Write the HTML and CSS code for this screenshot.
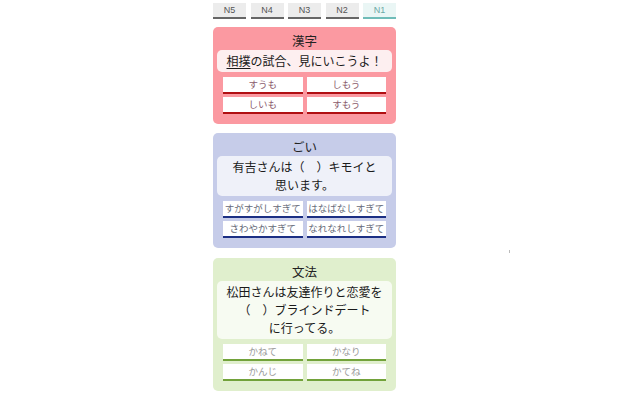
FILE: index.html
```html
<!DOCTYPE html>
<html lang="ja">
<head>
<meta charset="utf-8">
<link rel="stylesheet" href="styles.css">
</head>
<body>
<div class="app">
  <nav class="tabs">
    <div class="tab">N5</div>
    <div class="tab">N4</div>
    <div class="tab">N3</div>
    <div class="tab">N2</div>
    <div class="tab active">N1</div>
  </nav>

  <section class="card kanji">
    <div class="title">漢字</div>
    <div class="question"><u>相撲</u>の試合、見にいこうよ！</div>
    <div class="answers">
      <div class="answer">すうも</div>
      <div class="answer">しもう</div>
      <div class="answer">しいも</div>
      <div class="answer">すもう</div>
    </div>
  </section>

  <section class="card goi">
    <div class="title">ごい</div>
    <div class="question">有吉さんは（　）キモイと<br>思います。</div>
    <div class="answers">
      <div class="answer">すがすがしすぎて</div>
      <div class="answer">はなばなしすぎて</div>
      <div class="answer">さわやかすぎて</div>
      <div class="answer">なれなれしすぎて</div>
    </div>
  </section>

  <section class="card bunpo">
    <div class="title">文法</div>
    <div class="question">松田さんは友達作りと恋愛を<br>（　）ブラインドデート<br>に行ってる。</div>
    <div class="answers">
      <div class="answer">かねて</div>
      <div class="answer">かなり</div>
      <div class="answer">かんじ</div>
      <div class="answer">かてね</div>
    </div>
  </section>
</div>
<span class="dot"></span>
</body>
</html>
```

FILE: styles.css
```css
html, body {
  margin: 0;
  padding: 0;
  background: #ffffff;
}
body {
  font-family: "Noto Sans CJK JP", "Noto Sans", sans-serif;
  color: #222;
}
.app {
  width: 183px;
  margin-left: 213px;
  padding-top: 3px;
  display: flex;
  flex-direction: column;
}
.tabs {
  display: flex;
  justify-content: space-between;
  margin-bottom: 8px;
}
.tab {
  width: 33px;
  height: 14px;
  line-height: 14px;
  background: #ececec;
  border-bottom: 2px solid #666;
  text-align: center;
  font-family: "Liberation Sans", Arial, sans-serif;
  font-size: 9px;
  color: #555;
}
.tab.active {
  background: #eaf6f5;
  border-bottom-color: #6fbcb8;
  color: #6aa9a6;
}
.card {
  border-radius: 5px;
  padding: 4px 4px 10px;
  margin-bottom: 9px;
  display: flex;
  flex-direction: column;
}
.card.goi { margin-bottom: 10px; }
.title {
  height: 19px;
  line-height: 19px;
  text-align: center;
  font-size: 12.5px;
  color: #222;
}
.question {
  border-radius: 5px;
  padding: 2px 0;
  line-height: 18px;
  font-size: 12px;
  text-align: center;
  color: #1a1a1a;
}
.question u {
  text-decoration-thickness: 1px;
  text-underline-offset: 2px;
}
.answers {
  margin: 5px 6px 0;
  display: grid;
  grid-template-columns: 1fr 1fr;
  column-gap: 4px;
  row-gap: 3px;
}
.answer {
  background: #fff;
  height: 15px;
  line-height: 15px;
  font-size: 9.5px;
  text-align: center;
  border-bottom: 2px solid;
  white-space: nowrap;
  overflow: hidden;
}
.kanji { background: #fb99a1; }
.kanji .question { background: #fdeff0; }
.kanji .answer { border-bottom-color: #b10f12; color: #8a5b6c; }
.goi { background: #c6cce9; }
.goi .question { background: #eff1f9; }
.goi .answer { border-bottom-color: #1c2f84; color: #666a78; }
.bunpo { background: #e0efcd; }
.bunpo .question { background: #f7fbf2; }
.bunpo .answer { border-bottom-color: #72a23a; color: #9a9a9a; }
.dot {
  position: absolute;
  left: 509px;
  top: 250px;
  width: 1px;
  height: 3px;
  background: #bbb;
}
```
